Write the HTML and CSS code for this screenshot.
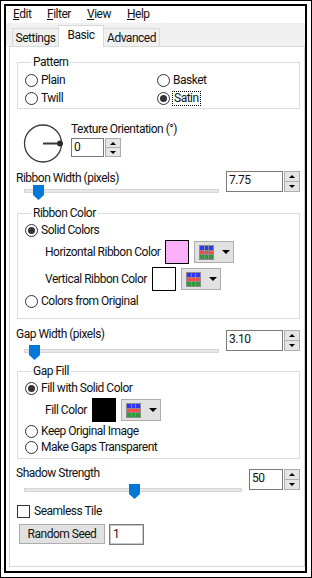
FILE: index.html
```html
<!DOCTYPE html>
<html>
<head>
<meta charset="utf-8">
<link rel="stylesheet" href="styles.css">
</head>
<body>
<div class="screen">
  <div class="dialog">
    <div class="menubar">
      <span class="menu menu-edit"><u>E</u>dit</span>
      <span class="menu menu-filter"><u>F</u>ilter</span>
      <span class="menu menu-view"><u>V</u>iew</span>
      <span class="menu"><u>H</u>elp</span>
    </div>
    <div class="tabs">
      <div class="tab tab-settings">Settings</div>
      <div class="tab tab-active">Basic</div>
      <div class="tab tab-advanced">Advanced</div>
    </div>
    <div class="panel">
      <fieldset class="group group-pattern">
        <legend>Pattern</legend>
        <div class="radio-grid">
          <div class="radio-row"><span class="radio"></span><span>Plain</span></div>
          <div class="radio-row"><span class="radio"></span><span>Basket</span></div>
          <div class="radio-row"><span class="radio"></span><span>Twill</span></div>
          <div class="radio-row"><span class="radio checked"></span><span class="focus">Satin</span></div>
        </div>
      </fieldset>

      <div class="orient">
        <svg class="dial" width="40" height="40" viewBox="0 0 40 40">
          <circle cx="20" cy="19.5" r="18.5" fill="none" stroke="#3a3a3a" stroke-width="1.3"/>
          <line x1="20" y1="19.5" x2="37" y2="19.5" stroke="#3a3a3a" stroke-width="2"/>
          <circle cx="37" cy="19.5" r="3" fill="#2a2a2a"/>
        </svg>
        <div class="orient-col">
          <div class="label">Texture Orientation (°)</div>
          <div class="spin spin-orient">
            <div class="spin-field">0</div>
            <div class="spin-btns"><div class="spin-btn"><span class="arrow-up"></span></div><div class="spin-btn"><span class="arrow-down"></span></div></div>
          </div>
        </div>
      </div>

      <div class="slider-block slider-ribbon">
        <div class="slider-col">
          <div class="label">Ribbon Width (pixels)</div>
          <div class="track track-short"><svg class="thumb thumb-ribbon" width="11" height="15" viewBox="0 0 11 15"><path d="M0 0H11V10L5.5 15L0 10Z" fill="#0078d7"/></svg></div>
        </div>
        <div class="spin spin-wide">
          <div class="spin-field">7.75</div>
          <div class="spin-btns"><div class="spin-btn"><span class="arrow-up"></span></div><div class="spin-btn"><span class="arrow-down"></span></div></div>
        </div>
      </div>

      <fieldset class="group group-ribbon">
        <legend>Ribbon Color</legend>
        <div class="radio-row"><span class="radio checked"></span><span>Solid Colors</span></div>
        <div class="color-row">
          <span>Horizontal Ribbon Color</span>
          <span class="swatch swatch-pink"></span>
          <span class="palette">
            <svg width="15" height="15" viewBox="0 0 15 15"><rect width="15" height="15" fill="#8c8c8c"/><rect x="1" y="1" width="4" height="4" fill="#3434ff"/><rect x="6" y="1" width="3" height="4" fill="#3434ff"/><rect x="10" y="1" width="4" height="4" fill="#3434ff"/><rect x="1" y="6" width="4" height="3" fill="#ff4a4a"/><rect x="6" y="6" width="3" height="3" fill="#ff4a4a"/><rect x="10" y="6" width="4" height="3" fill="#ff4a4a"/><rect x="1" y="10" width="4" height="4" fill="#2e9a3a"/><rect x="6" y="10" width="3" height="4" fill="#2e9a3a"/><rect x="10" y="10" width="4" height="4" fill="#2e9a3a"/></svg>
            <span class="arrow-drop"></span>
          </span>
        </div>
        <div class="color-row">
          <span>Vertical Ribbon Color</span>
          <span class="swatch swatch-white"></span>
          <span class="palette">
            <svg width="15" height="15" viewBox="0 0 15 15"><rect width="15" height="15" fill="#8c8c8c"/><rect x="1" y="1" width="4" height="4" fill="#3434ff"/><rect x="6" y="1" width="3" height="4" fill="#3434ff"/><rect x="10" y="1" width="4" height="4" fill="#3434ff"/><rect x="1" y="6" width="4" height="3" fill="#ff4a4a"/><rect x="6" y="6" width="3" height="3" fill="#ff4a4a"/><rect x="10" y="6" width="4" height="3" fill="#ff4a4a"/><rect x="1" y="10" width="4" height="4" fill="#2e9a3a"/><rect x="6" y="10" width="3" height="4" fill="#2e9a3a"/><rect x="10" y="10" width="4" height="4" fill="#2e9a3a"/></svg>
            <span class="arrow-drop"></span>
          </span>
        </div>
        <div class="radio-row"><span class="radio"></span><span>Colors from Original</span></div>
      </fieldset>

      <div class="slider-block slider-gap">
        <div class="slider-col">
          <div class="label">Gap Width (pixels)</div>
          <div class="track track-short"><svg class="thumb thumb-gap" width="11" height="15" viewBox="0 0 11 15"><path d="M0 0H11V10L5.5 15L0 10Z" fill="#0078d7"/></svg></div>
        </div>
        <div class="spin spin-wide">
          <div class="spin-field">3.10</div>
          <div class="spin-btns"><div class="spin-btn"><span class="arrow-up"></span></div><div class="spin-btn"><span class="arrow-down"></span></div></div>
        </div>
      </div>

      <fieldset class="group group-gap">
        <legend>Gap Fill</legend>
        <div class="radio-row"><span class="radio checked"></span><span>Fill with Solid Color</span></div>
        <div class="color-row">
          <span>Fill Color</span>
          <span class="swatch swatch-black"></span>
          <span class="palette">
            <svg width="15" height="15" viewBox="0 0 15 15"><rect width="15" height="15" fill="#8c8c8c"/><rect x="1" y="1" width="4" height="4" fill="#3434ff"/><rect x="6" y="1" width="3" height="4" fill="#3434ff"/><rect x="10" y="1" width="4" height="4" fill="#3434ff"/><rect x="1" y="6" width="4" height="3" fill="#ff4a4a"/><rect x="6" y="6" width="3" height="3" fill="#ff4a4a"/><rect x="10" y="6" width="4" height="3" fill="#ff4a4a"/><rect x="1" y="10" width="4" height="4" fill="#2e9a3a"/><rect x="6" y="10" width="3" height="4" fill="#2e9a3a"/><rect x="10" y="10" width="4" height="4" fill="#2e9a3a"/></svg>
            <span class="arrow-drop"></span>
          </span>
        </div>
        <div class="radio-row tight"><span class="radio"></span><span>Keep Original Image</span></div>
        <div class="radio-row tight"><span class="radio"></span><span>Make Gaps Transparent</span></div>
      </fieldset>

      <div class="slider-block slider-shadow">
        <div class="slider-col">
          <div class="label">Shadow Strength</div>
          <div class="track track-long"><svg class="thumb thumb-shadow" width="11" height="15" viewBox="0 0 11 15"><path d="M0 0H11V10L5.5 15L0 10Z" fill="#0078d7"/></svg></div>
        </div>
        <div class="spin spin-narrow">
          <div class="spin-field">50</div>
          <div class="spin-btns"><div class="spin-btn"><span class="arrow-up"></span></div><div class="spin-btn"><span class="arrow-down"></span></div></div>
        </div>
      </div>

      <div class="check-row"><span class="checkbox"></span><span>Seamless Tile</span></div>

      <div class="seed-row">
        <div class="button">Random Seed</div>
        <div class="seed-field">1</div>
      </div>
    </div>
  </div>
</div>
</body>
</html>
```

FILE: styles.css
```css
* { box-sizing: border-box; }
html, body { margin: 0; padding: 0; background: #fff; }
body {
  font-family: Roboto, "Liberation Sans", Arial, sans-serif;
  font-size: 12px;
  letter-spacing: -0.5px;
  color: #111;
}
.screen {
  width: 312px;
  height: 578px;
  border: 1px solid #000;
  padding: 3px 4px 4px 3px;
  background: #fff;
}
.dialog {
  height: 100%;
  border: 2px solid #000;
  display: flex;
  flex-direction: column;
  background: #fff;
}
.menubar {
  height: 17px;
  display: flex;
  padding-left: 7px;
  align-items: center;
  line-height: 15px;
}
.menu { display: inline-block; }
.menu-edit { width: 34px; }
.menu-filter { width: 40px; }
.menu-view { width: 40px; }
.menu u { text-decoration: underline; text-underline-offset: 1px; }
.tabs {
  height: 24px;
  background: #f0f0f0;
  display: flex;
  align-items: flex-end;
  padding-left: 6px;
  margin-bottom: -1px;
}
.tab {
  height: 19px;
  border: 1px solid #d9d9d9;
  border-bottom: none;
  background: #f0f0f0;
  text-align: center;
  line-height: 18px;
}
.tab-settings { width: 46px; border-right: none; }
.tab-active {
  width: 46px;
  height: 22px;
  background: #fff;
  line-height: 19px;
  position: relative;
}
.tab-advanced { width: 56px; border-left: none; }
.panel {
  flex: 1;
  margin: 0 0 4px 3px;
  border: 1px solid #d9d9d9;
  padding: 0 4px 0 0;
  background: #fff;
}
.group {
  border: 1px solid #dcdcdc;
  margin: 0 0 0 7px;
  padding: 0 0 0 7px;
  min-width: 0;
}
.group legend {
  padding: 0 2px;
  margin-left: 6px;
  line-height: 15px;
}
.group-pattern { margin-top: 8px; padding-bottom: 1px; }
.group-pattern .radio-grid { margin-top: 1px; }
.radio-grid {
  display: grid;
  grid-template-columns: 132px 1fr;
}
.radio-row {
  height: 18px;
  display: flex;
  align-items: center;
  gap: 3px;
}
.radio-row.tight { height: 16px; }
.radio {
  width: 13px;
  height: 13px;
  border: 1px solid #333;
  border-radius: 50%;
  background: #fff;
  flex: none;
  display: flex;
  align-items: center;
  justify-content: center;
}
.radio.checked::after {
  content: "";
  width: 7px;
  height: 7px;
  border-radius: 50%;
  background: #333;
}
.focus {
  outline: 1px dotted #000;
  padding: 0 1px;
  line-height: 13px;
}
.orient {
  display: flex;
  margin-top: 11px;
  margin-left: 13px;
}
.dial { margin-top: 4px; margin-right: 8px; flex: none; }
.label { line-height: 15px; white-space: nowrap; }
.orient-col .label { margin-top: 2px; }
.orient-col .spin { margin-top: 1px; }
.spin { display: flex; flex: none; }
.spin-field {
  border: 1px solid #7a7a7a;
  background: #fff;
  padding-left: 2px;
  line-height: 17px;
}
.spin-btns { display: flex; flex-direction: column; margin-left: 1px; }
.spin-btn {
  flex: 1;
  width: 16px;
  background: #e5e5e5;
  border: 1px solid #adadad;
  display: flex;
  align-items: center;
  justify-content: center;
}
.spin-btn + .spin-btn { border-top: none; }
.arrow-up, .arrow-down {
  width: 0; height: 0;
  border-left: 3px solid transparent;
  border-right: 3px solid transparent;
}
.arrow-up { border-bottom: 3px solid #000; }
.arrow-down { border-top: 3px solid #000; }
.spin-orient { height: 19px; }
.spin-orient .spin-field { width: 33px; }
.spin-wide { height: 21px; }
.spin-wide .spin-field { width: 57px; }
.spin-narrow { height: 21px; }
.spin-narrow .spin-field { width: 34px; }
.slider-block {
  display: flex;
  justify-content: space-between;
  margin-left: 6px;
}
.slider-block .spin { align-self: flex-end; margin-bottom: 2px; }
.slider-col { display: flex; flex-direction: column; }
.track {
  position: relative;
  height: 4px;
  margin-left: 8px;
  background: #e7e7e7;
  border: 1px solid #d6d6d6;
}
.track-short { width: 195px; }
.track-long { width: 218px; }
.thumb { position: absolute; top: -5px; }
.thumb-ribbon { left: 8px; }
.thumb-gap { left: 4px; }
.thumb-shadow { left: 104px; }
.slider-ribbon { margin-top: 7px; }
.slider-ribbon .track { margin-top: 3px; }
.slider-gap { margin-top: 8px; }
.slider-gap .track { margin-top: 7px; }
.slider-shadow { margin-top: 7px; }
.slider-shadow .track { margin-top: 7px; }
.group-ribbon { margin-top: 12px; padding-bottom: 8px; }
.group-ribbon .color-row + .color-row { margin-top: 1px; }
.group-gap { margin-top: 11px; padding-bottom: 3px; }
.color-row {
  height: 26px;
  display: flex;
  align-items: center;
  padding-left: 20px;
}
.swatch {
  width: 24px;
  height: 24px;
  border: 1px solid #000;
  margin-left: 5px;
  flex: none;
}
.swatch-pink { background: #fab0f8; }
.swatch-white { background: #fff; }
.swatch-black { background: #000; }
.palette {
  width: 40px;
  height: 22px;
  margin-left: 5px;
  background: #e1e1e1;
  border: 1px solid #adadad;
  display: flex;
  align-items: center;
  padding-left: 4px;
  gap: 8px;
  flex: none;
}
.arrow-drop {
  width: 0; height: 0;
  border-left: 4px solid transparent;
  border-right: 4px solid transparent;
  border-top: 4px solid #000;
}
.check-row {
  display: flex;
  align-items: center;
  gap: 4px;
  height: 16px;
  margin-top: 11px;
  margin-left: 7px;
}
.checkbox {
  width: 13px;
  height: 13px;
  border: 1px solid #333;
  background: #fff;
}
.seed-row {
  display: flex;
  gap: 4px;
  margin-top: 5px;
  margin-left: 9px;
}
.button {
  width: 86px;
  height: 20px;
  background: #e1e1e1;
  border: 1px solid #adadad;
  text-align: center;
  line-height: 18px;
}
.seed-field {
  width: 35px;
  height: 21px;
  border: 1px solid #7a7a7a;
  box-shadow: inset 0 0 0 1px #c8c8c8;
  padding-left: 3px;
  line-height: 19px;
}
```
